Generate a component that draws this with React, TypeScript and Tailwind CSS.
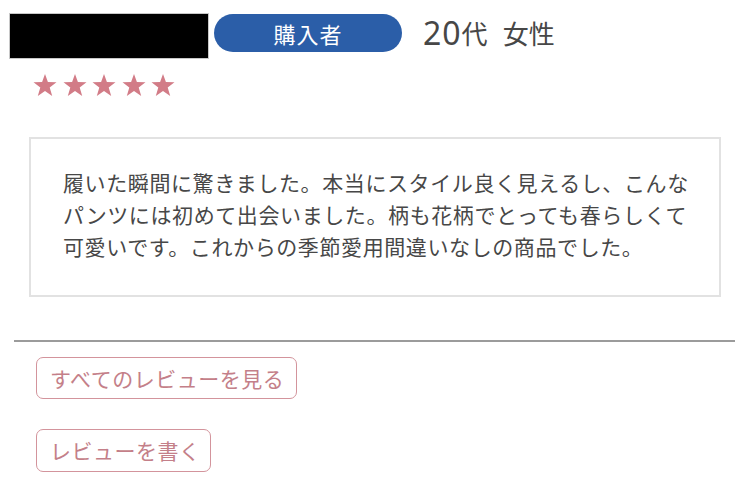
import React from "react";

const Star: React.FC = () => (
  <svg width="24" height="22" viewBox="0 0 24 22" className="block">
    <polygon
      points="12,0 14.9,8.1 23.5,8.3 16.7,13.6 19.2,22 12,17.1 4.8,22 7.3,13.6 0.5,8.3 9.1,8.1"
      fill="#d27c87"
    />
  </svg>
);

const reviewLines = [
  "履いた瞬間に驚きました。本当にスタイル良く見えるし、こんな",
  "パンツには初めて出会いました。柄も花柄でとっても春らしくて",
  "可愛いです。これからの季節愛用間違いなしの商品でした。",
];

const App: React.FC = () => {
  return (
    <div
      className="w-[750px] h-[485px] bg-white overflow-hidden"
      style={{ fontFamily: '"Noto Sans CJK JP", "Noto Sans", sans-serif' }}
    >
      {/* header */}
      <div className="flex items-start pt-[13px] pl-[9px]">
        <div className="w-[200px] h-[46px] bg-black border border-[#c8c8c8]" />
        <div className="ml-[5px] mt-[1px] w-[188px] h-[38px] rounded-full bg-[#2b5ea8] flex items-center justify-center">
          <span className="text-white text-[22px] leading-none tracking-[1px]">購入者</span>
        </div>
        <div className="ml-[21px] mt-[4px] h-[32px] flex items-center text-[#474747] text-[26px] leading-none">
          <span className="text-[32px] tracking-[1px]" style={{ fontFamily: '"Noto Sans", sans-serif' }}>
            20
          </span>
          <span>代</span>
          <span className="ml-[15px]">女性</span>
        </div>
      </div>

      {/* stars */}
      <div className="flex gap-[5.5px] pl-[33px] mt-[15px]">
        {[0, 1, 2, 3, 4].map((i) => (
          <Star key={i} />
        ))}
      </div>

      {/* review body */}
      <div className="mx-[29px] mt-[41px] h-[160px] border-2 border-[#e2e2e2] pt-[27px] pl-[32px]">
        <p className="text-[21px] leading-[32px] tracking-[0.6px] text-[#474747] whitespace-nowrap">
          {reviewLines.map((line, i) => (
            <span key={i} className="block">
              {line}
            </span>
          ))}
        </p>
      </div>

      <div className="ml-[14px] mr-[15px] mt-[43px] h-[2px] bg-[#9b9b9b]" />

      {/* actions */}
      <div className="flex flex-col items-start pl-[36px] mt-[15px] gap-[30px]">
        <button className="w-[261px] h-[42px] border-[1.5px] border-[#d3949c] rounded-[7px] text-left pl-[13px] text-[21px] tracking-[0.5px] leading-none text-[#c47f89]">
          すべてのレビューを見る
        </button>
        <button className="w-[175px] h-[43px] border-[1.5px] border-[#d3949c] rounded-[7px] text-left pl-[13px] text-[21px] tracking-[0.5px] leading-none text-[#c47f89]">
          レビューを書く
        </button>
      </div>
    </div>
  );
};

export default App;
